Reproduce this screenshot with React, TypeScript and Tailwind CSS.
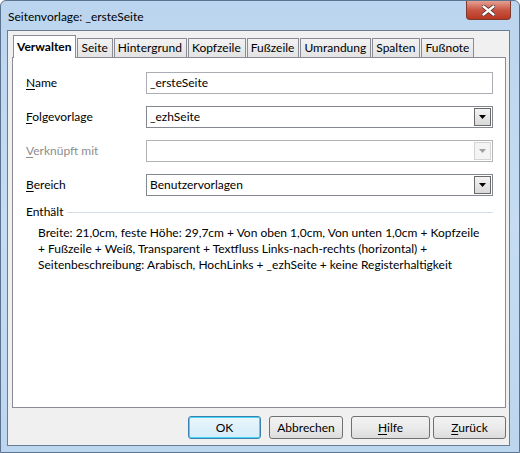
import React from "react";

const FONT = { fontFamily: 'Lato, "Noto Sans", Arial, sans-serif' };

const TABS = [
  "Verwalten",
  "Seite",
  "Hintergrund",
  "Kopfzeile",
  "Fußzeile",
  "Umrandung",
  "Spalten",
  "Fußnote",
];

function Arrow({ disabled }: { disabled?: boolean }) {
  return (
    <svg width="7" height="4" viewBox="0 0 7 4">
      <path d="M0 0 H7 L3.5 4 Z" fill={disabled ? "#a0a0a0" : "#000"} />
    </svg>
  );
}

function Field({
  label,
  u,
  value,
  dropdown,
  disabled,
}: {
  label: string;
  u: string;
  value: string;
  dropdown?: boolean;
  disabled?: boolean;
}) {
  return (
    <div className="flex items-center h-[22px]">
      <div
        className={`w-[120px] ${disabled ? "text-[#8d8d8d]" : "text-black"}`}
      >
        <span className="underline underline-offset-2">{u}</span>
        {label.slice(u.length)}
      </div>
      <div
        className={`flex-1 h-[22px] flex items-center bg-white border ${
          dropdown
            ? disabled
              ? "border-[#b3b3b3]"
              : "border-[#828790]"
            : "border-[#abadb3]"
        }`}
      >
        <span className="flex-1 pl-[3px] truncate">{value}</span>
        {dropdown && (
          <div
            className={`w-[17px] h-[18px] mr-[1px] flex items-center justify-center border ${
              disabled
                ? "border-[#d5d5d5] bg-[#f4f4f4]"
                : "border-[#6a6a6a] bg-gradient-to-b from-[#f3f3f3] to-[#d9d9d9]"
            }`}
          >
            <Arrow disabled={disabled} />
          </div>
        )}
      </div>
    </div>
  );
}

function Btn({
  children,
  focused,
  w,
}: {
  children: React.ReactNode;
  focused?: boolean;
  w: string;
}) {
  return (
    <button
      className={`${w} h-[23px] rounded-[3px] border flex items-center justify-center text-black ${
        focused
          ? "border-[#3c7fb1] shadow-[inset_0_0_0_1px_#48d4f5] bg-gradient-to-b from-[#eaf6fd] to-[#d3ecf9]"
          : "border-[#707070] bg-gradient-to-b from-[#f2f2f2] via-[#ebebeb] to-[#dcdcdc]"
      }`}
    >
      {children}
    </button>
  );
}

export default function App() {
  return (
    <div
      className="w-[520px] h-[453px] flex flex-col text-[12px] bg-gradient-to-b from-[#bcd5ef] via-[#c5dcf3] to-[#bdd6f0] border border-[#5c7390] rounded-t-[6px] overflow-hidden"
      style={FONT}
    >
      {/* Title bar */}
      <div className="h-[29px] flex items-start shrink-0">
        <div className="flex-1 pl-[7px] pt-[7px] text-black">
          Seitenvorlage: _ersteSeite
        </div>
        <div className="mr-[8px] w-[45px] h-[19px] rounded-b-[4px] border border-t-0 border-[#7d3a2e] bg-gradient-to-b from-[#e3a093] via-[#c95544] to-[#b8361f] flex items-center justify-center">
          <svg width="13" height="11" viewBox="0 0 13 11">
            <path
              d="M1.5 1.5 L11.5 9.5 M11.5 1.5 L1.5 9.5"
              stroke="#4a2a26"
              strokeWidth="4"
              strokeLinecap="round"
            />
            <path
              d="M1.5 1.5 L11.5 9.5 M11.5 1.5 L1.5 9.5"
              stroke="#fff"
              strokeWidth="2.4"
              strokeLinecap="round"
            />
          </svg>
        </div>
      </div>

      {/* Client area */}
      <div className="flex-1 ml-[6px] mr-[9px] mb-[6px] bg-[#f0f0f0] border border-[#6d7c8e] flex flex-col pl-[4px] pr-[3px] pt-[4px] pb-[6px]">
        {/* Tabs */}
        <div className="flex items-end h-[22px] relative z-10">
          {TABS.map((t, i) =>
            i === 0 ? (
              <div
                key={t}
                className="h-[23px] -mb-[1px] ml-[1px] pl-[3px] pr-[4px] flex items-center bg-white border border-b-0 border-[#898c95] font-bold"
              >
                {t}
              </div>
            ) : (
              <div
                key={t}
                className="h-[19px] pl-[3px] pr-[4px] ml-[1px] flex items-center border border-[#898c95] border-b-0 bg-gradient-to-b from-[#f2f2f2] to-[#e3e3e3]"
              >
                {t}
              </div>
            )
          )}
        </div>
        {/* Panel */}
        <div className="flex-1 bg-white border border-[#898c95] pl-[13px] pr-[12px] pt-[14px] flex flex-col">
          <div className="flex flex-col gap-[12px]">
            <Field label="Name" u="N" value="_ersteSeite" />
            <Field label="Folgevorlage" u="F" value="_ezhSeite" dropdown />
            <Field label="Verknüpft mit" u="V" value="" dropdown disabled />
            <Field label="Bereich" u="B" value="Benutzervorlagen" dropdown />
          </div>
          <div className="flex items-center mt-[8px] h-[16px]">
            <span>Enthält</span>
            <div className="flex-1 h-[1px] bg-[#d5dfe5] ml-[4px]" />
          </div>
          <p className="pl-[12px] mt-[5px] leading-[16px] pr-[4px]">
            Breite: 21,0cm, feste Höhe: 29,7cm + Von oben 1,0cm, Von unten
            1,0cm + Kopfzeile + Fußzeile + Weiß, Transparent + Textfluss
            Links-nach-rechts (horizontal) + Seitenbeschreibung: Arabisch,
            HochLinks + _ezhSeite + keine Registerhaltigkeit
          </p>
        </div>
        {/* Buttons */}
        <div className="flex justify-end items-center mt-[8px]">
          <Btn focused w="w-[73px]">
            OK
          </Btn>
          <div className="w-[8px]" />
          <Btn w="w-[74px]">Abbrechen</Btn>
          <div className="w-[8px]" />
          <Btn w="w-[79px]">
            <span>
              <span className="underline underline-offset-2">H</span>ilfe
            </span>
          </Btn>
          <div className="w-[3px]" />
          <Btn w="w-[73px]">
            <span>
              <span className="underline underline-offset-2">Z</span>urück
            </span>
          </Btn>
        </div>
      </div>
    </div>
  );
}
